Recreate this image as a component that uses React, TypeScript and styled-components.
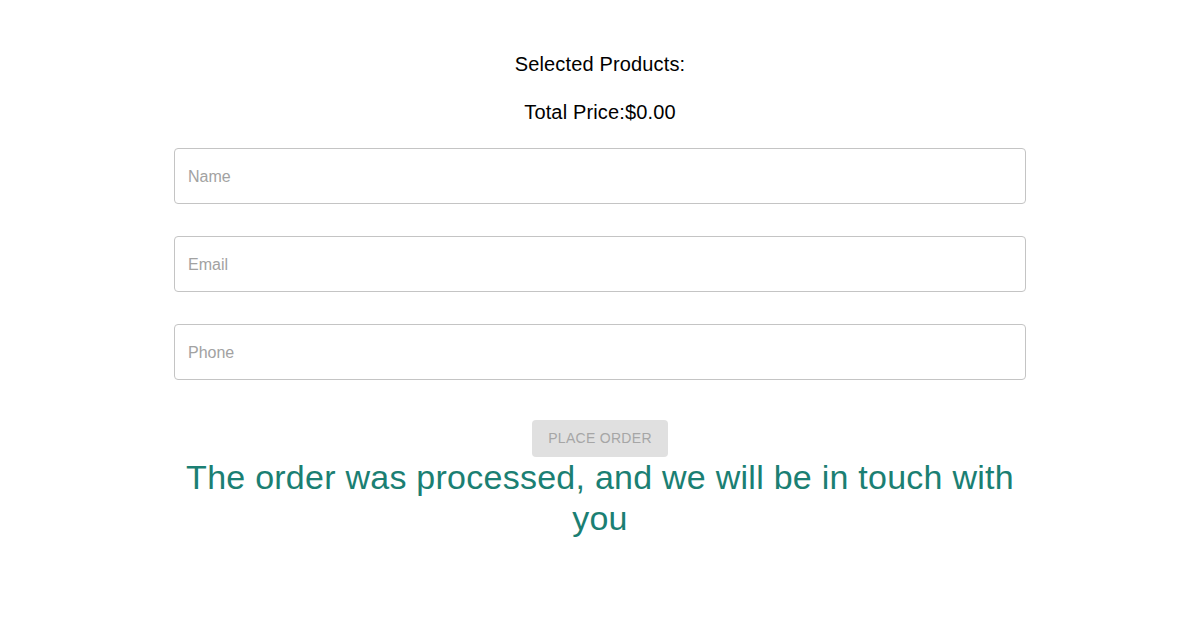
import React from "react";
import styled, { createGlobalStyle } from "styled-components";

const Global = createGlobalStyle`
  body {
    margin: 0;
    background: #ffffff;
    font-family: "Liberation Sans", Arial, sans-serif;
  }
`;

const Page = styled.main`
  width: 852px;
  margin: 0 auto;
  padding-top: 48px;
  display: flex;
  flex-direction: column;
  align-items: stretch;
`;

const Heading = styled.div<{ $gap: number }>`
  font-size: 20px;
  line-height: 32px;
  letter-spacing: 0.15px;
  color: #000;
  text-align: center;
  margin-bottom: ${(p) => p.$gap}px;
`;

const Form = styled.form`
  display: flex;
  flex-direction: column;
  gap: 32px;
`;

const Input = styled.input`
  box-sizing: border-box;
  width: 100%;
  height: 56px;
  padding: 1px 13px 0;
  border: 1px solid #c4c4c4;
  border-radius: 4px;
  font-family: "Liberation Sans", Arial, sans-serif;
  font-size: 16px;
  color: #222;
  outline: none;
  &::placeholder {
    color: #a2a2a2;
  }
`;

const ButtonRow = styled.div`
  display: flex;
  justify-content: center;
  margin-top: 8px;
`;

const Button = styled.button`
  box-sizing: border-box;
  height: 36.5px;
  padding: 0 16px;
  border: none;
  border-radius: 4px;
  background: #e0e0e0;
  color: #a6a6a6;
  font-family: "Liberation Sans", Arial, sans-serif;
  font-size: 14px;
  letter-spacing: 0.3px;
  text-transform: uppercase;
  cursor: default;
`;

const Success = styled.div`
  font-size: 34px;
  line-height: 41px;
  letter-spacing: 0.25px;
  color: #1b7f73;
  text-align: center;
`;

export default function App() {
  return (
    <>
      <Global />
      <Page>
        <Heading $gap={16}>Selected Products:</Heading>
        <Heading $gap={20}>Total Price:$0.00</Heading>
        <Form onSubmit={(e) => e.preventDefault()}>
          <Input placeholder="Name" />
          <Input placeholder="Email" />
          <Input placeholder="Phone" />
          <ButtonRow>
            <Button type="submit" disabled>
              Place order
            </Button>
          </ButtonRow>
        </Form>
        <Success>The order was processed, and we will be in touch with you</Success>
      </Page>
    </>
  );
}
